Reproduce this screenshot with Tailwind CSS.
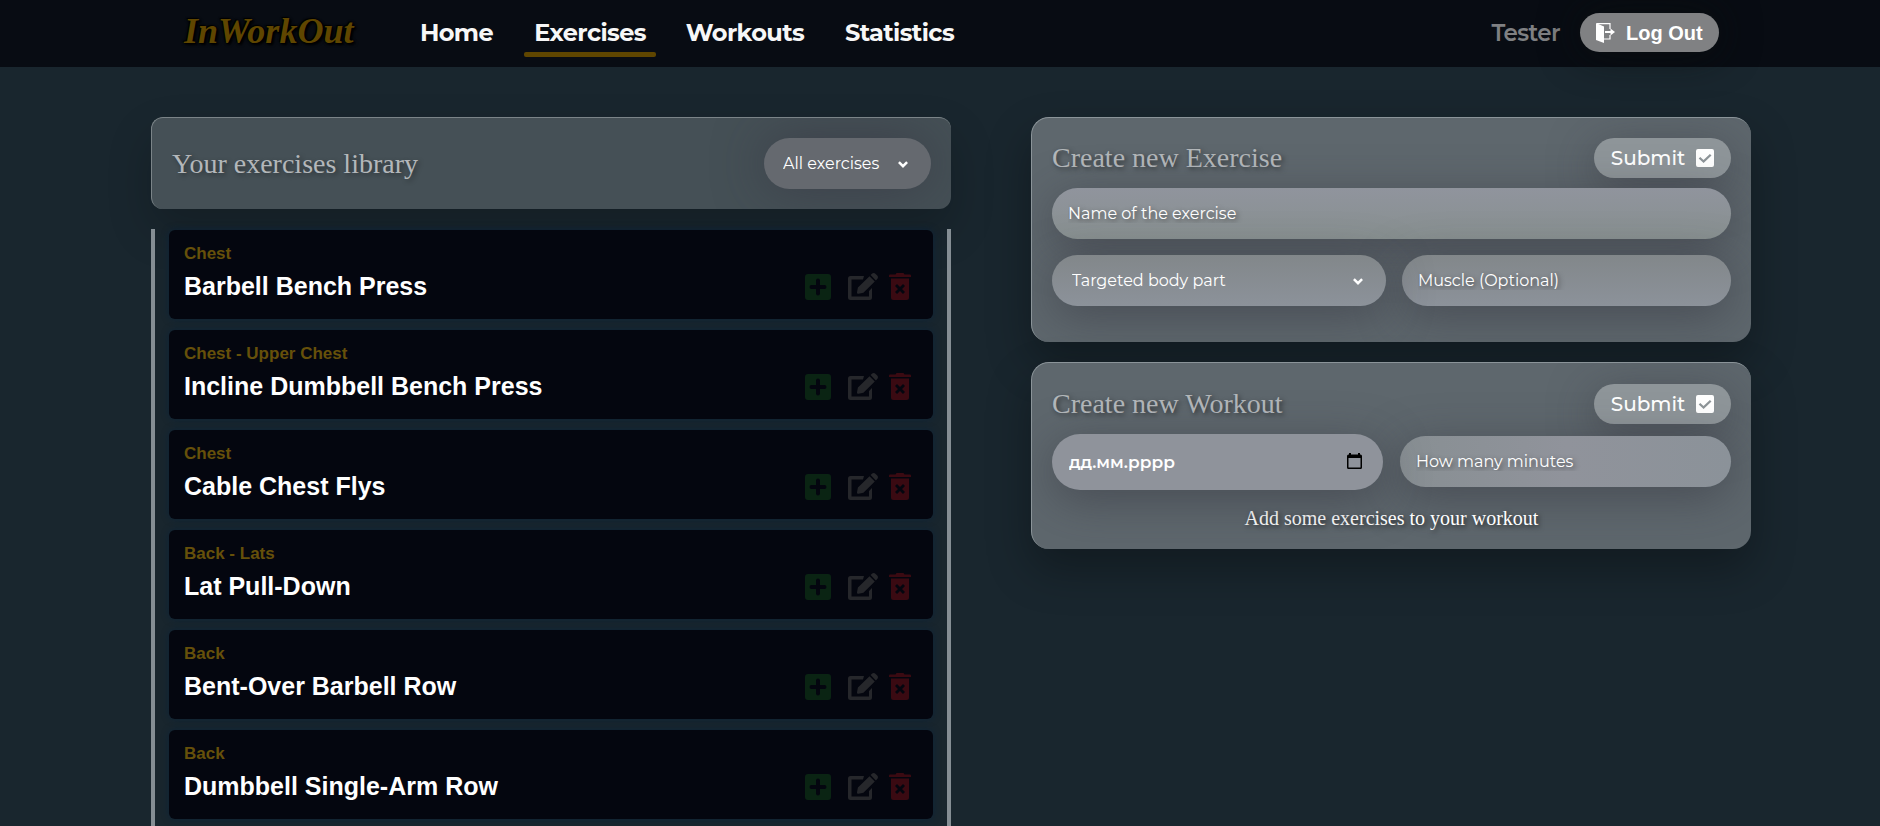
<!DOCTYPE html>
<html lang="en">
<head>
<meta charset="utf-8">
<meta name="viewport" content="width=device-width, initial-scale=1">
<title>InWorkOut</title>
<script src="https://cdn.jsdelivr.net/npm/@tailwindcss/browser@4"></script>
</head>
<body class="h-screen overflow-hidden bg-[#19262e] font-[Montserrat,Inter,sans-serif] text-white">
<svg class="hidden" aria-hidden="true">
  <symbol id="plus" viewBox="0 0 26 26"><path fill-rule="evenodd" d="M3 0h20a3 3 0 0 1 3 3v20a3 3 0 0 1-3 3H3a3 3 0 0 1-3-3V3a3 3 0 0 1 3-3ZM13 4.500a2 2 0 0 0-2 2V11H6.500a2 2 0 0 0 0 4H11v4.500a2 2 0 0 0 4 0V15h4.500a2 2 0 0 0 0-4H15V6.500a2 2 0 0 0-2-2Z"/></symbol>
  <symbol id="edit" viewBox="0 0 30 27"><path d="M16 3H2.500A2.500 2.500 0 0 0 0 5.500v19A2.500 2.500 0 0 0 2.500 27h19a2.500 2.500 0 0 0 2.500-2.500V15l-3 3v5.500H3.500V6.500H15Z"/><path d="m21.500 3.200 5.300 5.300L15.400 19.800l-4.900.9c-.9.200-1.700-.6-1.500-1.500l.9-4.600ZM22.600 2.100l1.300-1.300c1-1 2.500-1 3.500 0l1.800 1.800c1 1 1 2.500 0 3.500l-1.300 1.300Z"/></symbol>
  <symbol id="trash" viewBox="0 0 22 27"><path fill-rule="evenodd" d="M7.500 0h7l1 1.500H21a1 1 0 0 1 1 1V4H0V2.500a1 1 0 0 1 1-1h5.500ZM2 5.500h18v19a2.500 2.500 0 0 1-2.500 2.500h-13A2.500 2.500 0 0 1 2 24.500ZM8 11l-2 2 3 3-3 3 2 2 3-3 3 3 2-2-3-3 3-3-2-2-3 3Z"/></symbol>
  <symbol id="check" viewBox="0 0 18 18"><path fill-rule="evenodd" d="M2 0h14a2 2 0 0 1 2 2v14a2 2 0 0 1-2 2H2a2 2 0 0 1-2-2V2a2 2 0 0 1 2-2ZM7.600 14 15.500 6.600 13.900 4.900 7.500 10.900 4.300 7.900 2.700 9.600Z"/></symbol>
  <symbol id="chevron" viewBox="0 0 10 7"><path d="M.9 1.100 5 5.200l4.100-4.100" fill="none" stroke="currentColor" stroke-width="2.500"/></symbol>
</svg>

<header class="flex h-[67px] items-center bg-[#080c13] pr-[161px] pb-[2px] pl-[184px]">
  <a href="#" class="w-[225px] pb-1 font-['Liberation_Serif',serif] text-[36px] leading-none font-bold italic text-[#5f4600] [text-shadow:0_0_3px_#000,1px_1px_1px_#000,-1px_-1px_1px_#000,2px_2px_3px_#000]">InWorkOut</a>
  <nav class="flex gap-5 text-[24px] leading-[28px] font-bold tracking-tight text-[#f7f7f7]">
    <a href="#" class="w-[95px] border-b-[5px] border-transparent pt-[10px] pb-[5px] text-center">Home</a>
    <a href="#" class="w-[132px] pt-[10px] text-center"><span class="block pb-[5px]">Exercises</span><span class="block h-[5px] rounded-xs bg-[#5f4600]"></span></a>
    <a href="#" class="w-[138px] border-b-[5px] border-transparent pt-[10px] pb-[5px] text-center">Workouts</a>
    <a href="#" class="w-[131px] border-b-[5px] border-transparent pt-[10px] pb-[5px] text-center">Statistics</a>
  </nav>
  <div class="ml-auto flex items-center gap-5">
    <span class="pt-[2px] text-[23px] font-semibold tracking-tight text-[#7f8082]">Tester</span>
    <button class="flex h-[39px] w-[139px] items-center gap-[11px] rounded-full bg-[#808183] pl-4 font-['Liberation_Sans',sans-serif] text-[20px] font-bold shadow-[0_0_40px_rgba(10,14,14,0.8)]">
      <svg class="h-5 w-[19px]" viewBox="0 0 19 20" fill="none"><path d="M1 .6h13V6M14 12v4H8" stroke="#fff" stroke-width="1.200"/><path d="M0 0 8 3.500V20L0 17Z" fill="#fff"/><path d="M9 9h6" stroke="#fff" stroke-width="2"/><path d="M14.500 5.500 19 9l-4.500 3.500Z" fill="#fff"/></svg>
      Log Out
    </button>
  </div>
</header>

<main class="flex items-start gap-20 pt-[50px] pr-[129px] pl-[151px]">
  <section class="min-w-0 flex-[10]">
    <div class="flex h-[92px] items-center justify-between overflow-hidden rounded-[12px] border-t border-l border-t-[#7b8488] border-l-[#7b8488] bg-[#455056] px-5 shadow-[0_20px_45px_rgba(0,0,0,0.2)]">
      <h2 class="font-['Liberation_Serif',serif] text-[28px] text-[#b3b7ba] [text-shadow:2px_2px_5px_rgba(0,0,0,0.4)]">Your exercises library</h2>
      <div class="relative">
        <select aria-label="Filter exercises" class="h-[51px] w-[167px] appearance-none rounded-full bg-[#65696f] pl-[19px] text-base shadow-[0_0_50px_rgba(50,45,60,0.5)]"><option>All exercises</option></select>
        <svg class="pointer-events-none absolute top-[23px] right-[23px] h-[7px] w-[10px]"><use href="#chevron"/></svg>
      </div>
    </div>
    <ul id="list" class="mt-5 flex flex-col gap-[11px] border-x-4 border-[#858e94] px-[14px] pt-px pb-10"></ul>
  </section>

  <div class="flex min-w-0 flex-[9] flex-col gap-5">
    <form class="h-[225px] overflow-hidden rounded-[18px] border-t border-l border-[#8b9499] bg-[#5e676d] p-5 shadow-[0_20px_45px_rgba(0,0,0,0.3)]">
      <div class="flex h-10 items-center justify-between">
        <h2 class="font-['Liberation_Serif',serif] text-[28px] text-[#b3b7ba] [text-shadow:2px_2px_5px_rgba(0,0,0,0.5)]">Create new Exercise</h2>
        <button type="button" class="flex h-10 w-[137px] items-center justify-center gap-[11px] rounded-full bg-white/30 text-[20px] font-medium shadow-[0_10px_45px_rgba(50,50,60,0.5)]">Submit<svg class="size-[18px]" fill="#fff"><use href="#check"/></svg></button>
      </div>
      <input aria-label="Name of the exercise" placeholder="Name of the exercise" class="mt-[10px] h-[51px] w-full rounded-full bg-gradient-to-b from-[#90949d] to-[#889090] px-4 text-base shadow-[0_10px_45px_rgba(50,50,60,0.5)] [text-shadow:2px_2px_5px_rgba(0,0,0,0.5)] placeholder:text-white">
      <div class="mt-4 grid grid-cols-[334fr_329fr] gap-4">
        <div class="relative">
          <select aria-label="Targeted body part" class="h-[51px] w-full appearance-none rounded-full bg-gradient-to-b from-[#82878a] to-[#8c929a] pl-5 text-base shadow-[0_10px_45px_rgba(50,50,60,0.5)]"><option>Targeted body part</option></select>
          <svg class="pointer-events-none absolute top-[23px] right-[23px] h-[7px] w-[10px]"><use href="#chevron"/></svg>
        </div>
        <input aria-label="Muscle" placeholder="Muscle (Optional)" class="h-[51px] w-full rounded-full bg-gradient-to-b from-[#82878a] to-[#8c929a] px-4 text-base shadow-[0_10px_45px_rgba(50,50,60,0.5)] [text-shadow:2px_2px_5px_rgba(0,0,0,0.5)] placeholder:text-white">
      </div>
    </form>

    <form class="h-[187px] overflow-hidden rounded-[18px] border-t border-l border-[#8b9499] bg-[#5e676d] p-5 shadow-[0_20px_45px_rgba(0,0,0,0.3)]">
      <div class="mt-px flex h-10 items-center justify-between">
        <h2 class="font-['Liberation_Serif',serif] text-[28px] text-[#b3b7ba] [text-shadow:2px_2px_5px_rgba(0,0,0,0.5)]">Create new Workout</h2>
        <button type="button" class="flex h-10 w-[137px] items-center justify-center gap-[11px] rounded-full bg-white/30 text-[20px] font-medium shadow-[0_10px_45px_rgba(50,50,60,0.5)]">Submit<svg class="size-[18px]" fill="#fff"><use href="#check"/></svg></button>
      </div>
      <div class="mt-[10px] grid grid-cols-2 gap-[17px]">
        <div class="relative">
          <input aria-label="Date" placeholder="дд.мм.рррр" class="h-14 w-full rounded-full bg-[#8f939b] px-[17px] text-[17px] font-semibold shadow-[0_10px_45px_rgba(50,50,60,0.5)] placeholder:text-white">
          <svg class="pointer-events-none absolute top-[19px] right-[21px] h-4 w-[15px]" viewBox="0 0 15 16"><path fill-rule="evenodd" d="M2 0h2v1.500h7V0h2v1.500h.5A1.500 1.500 0 0 1 15 3v11.500A1.500 1.500 0 0 1 13.500 16h-12A1.500 1.500 0 0 1 0 14.500V3a1.500 1.500 0 0 1 1.500-1.500H2ZM1.500 5v9.500h12V5Z"/></svg>
        </div>
        <input aria-label="How many minutes" placeholder="How many minutes" class="mt-[2px] h-[51px] w-full rounded-full bg-gradient-to-r from-[#888f93] via-[#90939b] to-[#8b9299] px-4 text-base shadow-[0_10px_45px_rgba(50,50,60,0.5)] [text-shadow:2px_2px_5px_rgba(0,0,0,0.5)] placeholder:text-white">
      </div>
      <p class="mt-4 text-center font-['Liberation_Serif',serif] text-[20px] leading-6 [text-shadow:2px_2px_5px_rgba(0,0,0,0.6)]">Add some exercises to your workout</p>
    </form>
  </div>
</main>

<template id="row">
  <li class="flex h-[89px] shrink-0 items-start justify-between rounded-[6px] bg-[#04060f] pt-[14px] pr-[22px] pl-[15px] shadow-[0_0_7px_#0c2338]">
    <div class="font-['Liberation_Sans',sans-serif] font-bold">
      <p class="text-[17px] leading-5 text-[#66500a]"></p>
      <h3 class="mt-2 text-[25px] leading-7"></h3>
    </div>
    <div class="flex items-end pt-[29px]">
      <button aria-label="Add to workout"><svg class="h-[26px] w-[26px] fill-[#0a2413]"><use href="#plus"/></svg></button>
      <button aria-label="Edit" class="ml-[17px]"><svg class="h-[27px] w-[30px] fill-[#26272b]"><use href="#edit"/></svg></button>
      <button aria-label="Delete" class="ml-[11px]"><svg class="h-[27px] w-[22px] fill-[#3a0a12]"><use href="#trash"/></svg></button>
    </div>
  </li>
</template>
<script>
const exercises = [
  ["Chest", "Barbell Bench Press"],
  ["Chest - Upper Chest", "Incline Dumbbell Bench Press"],
  ["Chest", "Cable Chest Flys"],
  ["Back - Lats", "Lat Pull-Down"],
  ["Back", "Bent-Over Barbell Row"],
  ["Back", "Dumbbell Single-Arm Row"]
];
const list = document.getElementById("list");
const row = document.getElementById("row");
for (const [part, name] of exercises) {
  const item = row.content.cloneNode(true);
  item.querySelector("p").textContent = part;
  item.querySelector("h3").textContent = name;
  list.append(item);
}
</script>
</body>
</html>
